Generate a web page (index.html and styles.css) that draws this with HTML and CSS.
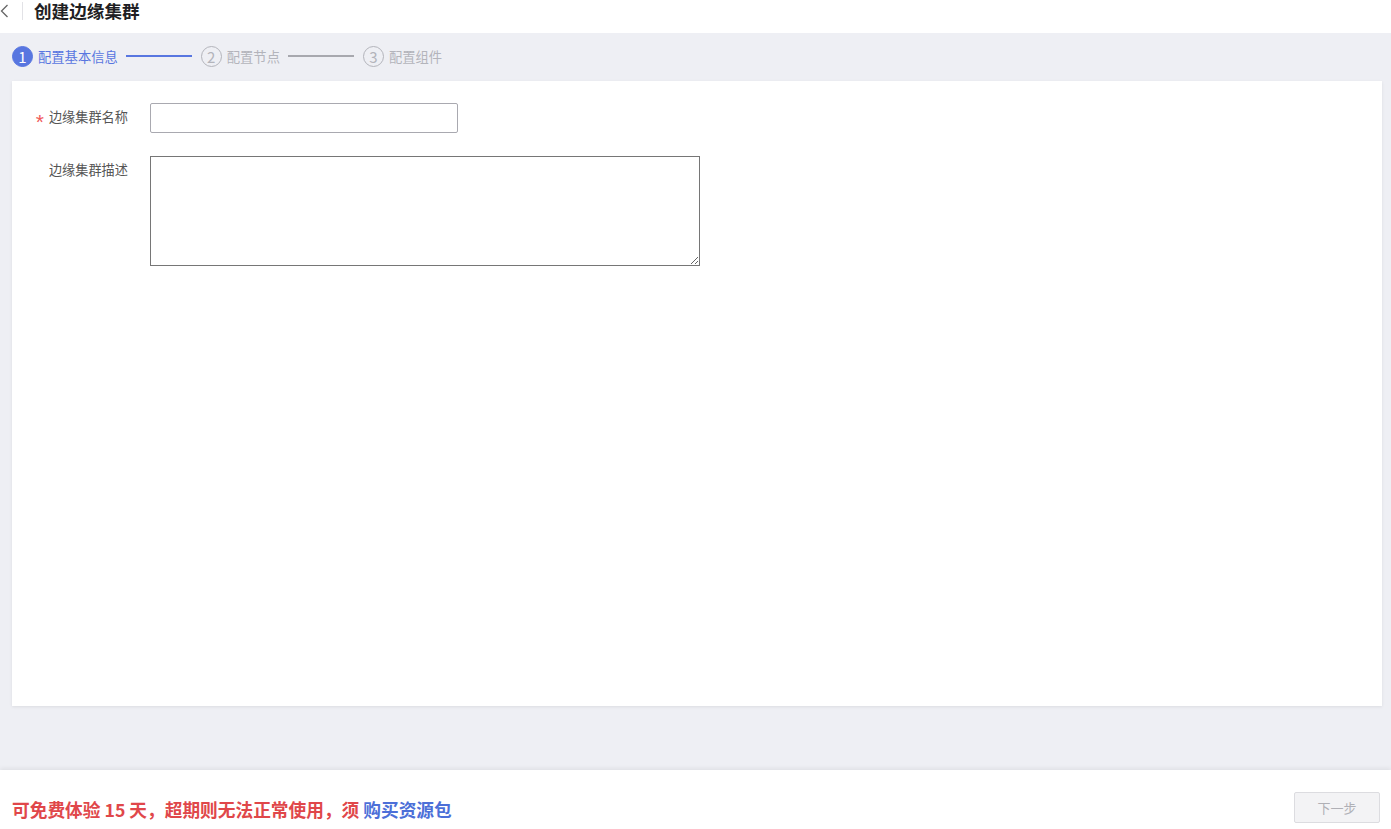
FILE: index.html
```html
<!DOCTYPE html>
<html lang="zh-CN">
<head>
    <meta charset="UTF-8">
    <title>创建边缘集群</title>
    <link rel="stylesheet" href="styles.css">
</head>
<body>
    <div class="page">
        <!-- 顶部标题栏 -->
        <div class="top-bar">
            <span class="back">
                <svg width="9" height="14" viewBox="0 0 9 14"><path d="M7.5 1 L1.5 7 L7.5 13" fill="none" stroke="#666" stroke-width="1.3"/></svg>
            </span>
            <span class="divider"></span>
            <h1 class="title">创建边缘集群</h1>
        </div>

        <div class="content">
            <!-- 步骤条 -->
            <div class="steps">
                <div class="step active">
                    <span class="step-num">1</span>
                    <span class="step-text">配置基本信息</span>
                </div>
                <span class="step-line active"></span>
                <div class="step">
                    <span class="step-num">2</span>
                    <span class="step-text">配置节点</span>
                </div>
                <span class="step-line"></span>
                <div class="step">
                    <span class="step-num">3</span>
                    <span class="step-text">配置组件</span>
                </div>
            </div>

            <!-- 表单 -->
            <div class="card">
                <div class="form-row">
                    <label class="form-label"><span class="required">*</span>边缘集群名称</label>
                    <input type="text" class="form-input">
                </div>
                <div class="form-row">
                    <label class="form-label">边缘集群描述</label>
                    <textarea class="form-textarea"></textarea>
                </div>
            </div>
        </div>

        <!-- 底部 -->
        <div class="footer">
            <div class="notice">可免费体验 15 天，超期则无法正常使用，须 <a class="buy-link">购买资源包</a></div>
            <button class="next-btn" disabled>下一步</button>
        </div>
    </div>
</body>
</html>
```

FILE: styles.css
```css
body {
    margin: 0;
    padding: 0;
    font-family: "Noto Sans CJK SC", "Liberation Sans", sans-serif;
    background-color: #eeeff4;
    color: #333;
}

.page {
    display: flex;
    flex-direction: column;
    height: 100vh;
}

.top-bar {
    height: 33px;
    background-color: #fff;
    display: flex;
    align-items: flex-start;
    flex-shrink: 0;
}

.back {
    width: 10px;
    display: flex;
    padding-top: 4px;
}

.divider {
    width: 1px;
    height: 18px;
    background-color: #e2e2e6;
    margin: 2px 0 0 12px;
}

.title {
    margin: 0 0 0 11px;
    font-size: 17.6px;
    line-height: 22px;
    font-weight: bold;
    color: #1f1f24;
}

.content {
    flex: 1;
    padding: 0 9px 0 12px;
    display: flex;
    flex-direction: column;
}

.steps {
    display: flex;
    align-items: center;
    height: 46px;
    padding-bottom: 2px;
}

.step {
    display: flex;
    align-items: center;
    color: #b3b4bb;
    font-size: 13.3px;
}

.step-num {
    width: 19px;
    height: 19px;
    border-radius: 50%;
    border: 1px solid #b3b4bb;
    display: flex;
    align-items: center;
    justify-content: center;
    font-size: 15px;
    margin-right: 5px;
}

.step.active {
    color: #5876e0;
}

.step.active .step-num {
    background-color: #5876e0;
    border-color: #5876e0;
    color: #fff;
}

.step-line {
    width: 66px;
    height: 2px;
    background-color: #a7a8ae;
    margin: 0 9px 0 8px;
}

.step-line.active {
    background-color: #5876e0;
}

.card {
    background-color: #fff;
    height: 625px;
    box-shadow: 0 1px 3px rgba(0, 0, 0, 0.08);
    padding-top: 22px;
    box-sizing: border-box;
}

.form-row {
    display: flex;
    align-items: flex-start;
    margin-bottom: 23px;
}

.form-label {
    width: 116px;
    text-align: right;
    font-size: 13.2px;
    line-height: 18px;
    color: #555;
    padding-top: 5px;
    margin-right: 22px;
}

.required {
    color: #f05a5a;
    font-family: "Liberation Sans", sans-serif;
    font-size: 21px;
    line-height: 10px;
    margin-right: 5px;
    position: relative;
    top: 7px;
}

.form-input {
    width: 308px;
    height: 30px;
    box-sizing: border-box;
    border: 1px solid #a9a9b0;
    border-radius: 2px;
    outline: none;
}

.form-textarea {
    width: 550px;
    height: 110px;
    box-sizing: border-box;
    border: 1px solid #767676;
    border-radius: 0;
    margin: 0;
}

.footer {
    height: 59px;
    background-color: #fff;
    flex-shrink: 0;
    display: flex;
    align-items: center;
    justify-content: space-between;
    padding: 0 11px 0 12px;
    box-shadow: 0 -2px 4px rgba(0, 0, 0, 0.06);
}

.notice {
    color: #e0474a;
    font-size: 17.7px;
    font-weight: bold;
    margin-top: 19px;
}

.buy-link {
    color: #4c6fd8;
    cursor: pointer;
}

.next-btn {
    width: 86px;
    height: 31px;
    background-color: #f3f3f5;
    border: 1px solid #dcdce0;
    border-radius: 2px;
    color: #b0b0b6;
    font-family: inherit;
    font-size: 13px;
    margin-top: 15px;
}
```
